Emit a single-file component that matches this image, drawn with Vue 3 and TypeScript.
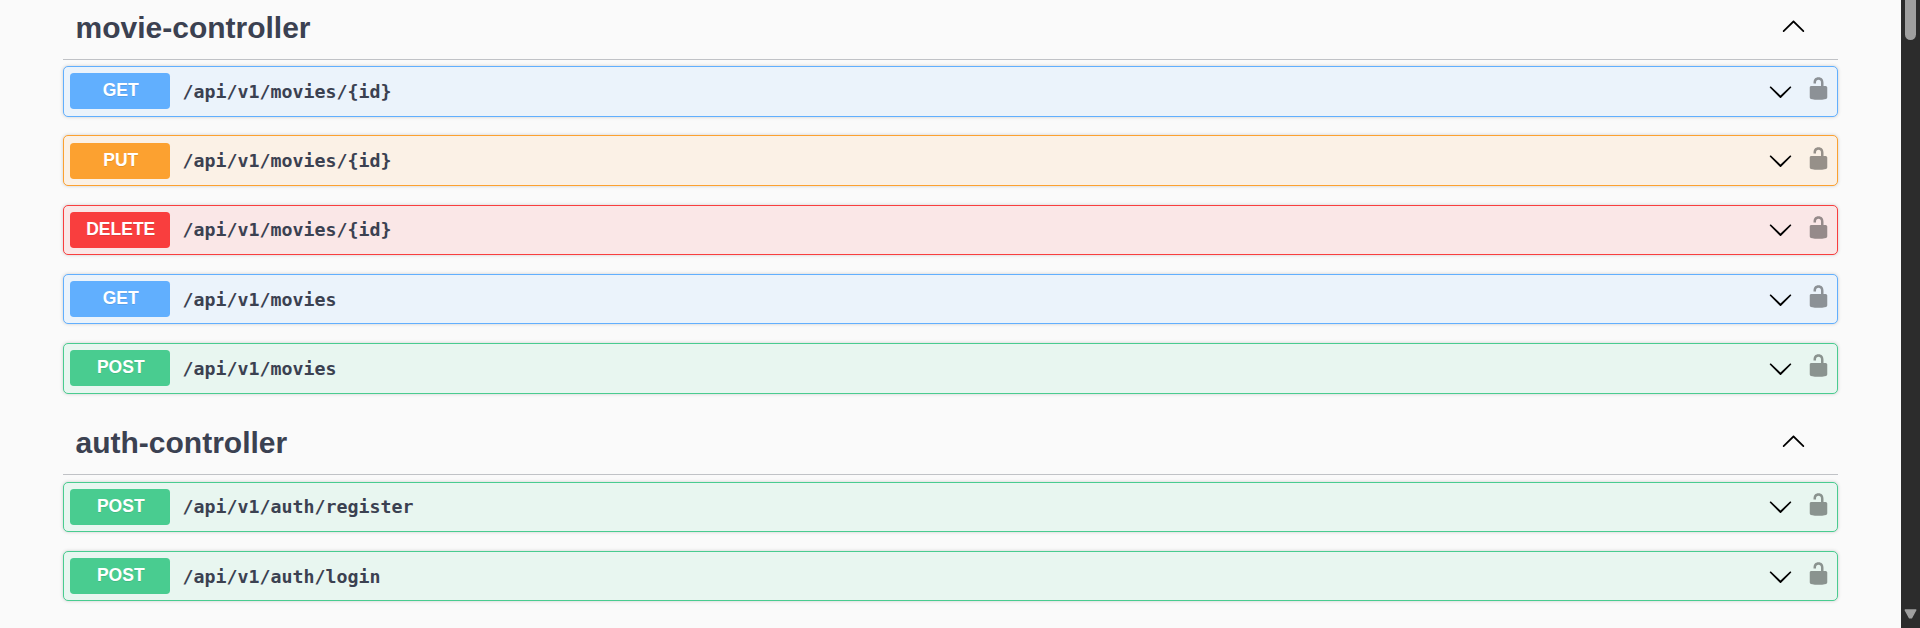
<script setup lang="ts">
interface Operation {
  method: 'get' | 'put' | 'delete' | 'post'
  path: string
}

interface Section {
  name: string
  operations: Operation[]
}

const sections: Section[] = [
  {
    name: 'movie-controller',
    operations: [
      { method: 'get', path: '/api/v1/movies/{id}' },
      { method: 'put', path: '/api/v1/movies/{id}' },
      { method: 'delete', path: '/api/v1/movies/{id}' },
      { method: 'get', path: '/api/v1/movies' },
      { method: 'post', path: '/api/v1/movies' },
    ],
  },
  {
    name: 'auth-controller',
    operations: [
      { method: 'post', path: '/api/v1/auth/register' },
      { method: 'post', path: '/api/v1/auth/login' },
    ],
  },
]
</script>

<template>
  <div class="viewport">
    <main class="content">
      <section v-for="section in sections" :key="section.name">
        <h3 class="tag">
          <span class="tag-name">{{ section.name }}</span>
          <svg class="arrow" viewBox="0 0 20 20" aria-hidden="true">
            <path d="M17.418 14.908c.272.268.709.268.979 0s.271-.701 0-.969l-7.908-7.83c-.27-.268-.707-.268-.979 0l-7.908 7.83c-.27.268-.27.701 0 .969.271.268.709.268.979 0L10 7.767z" />
          </svg>
        </h3>
        <div
          v-for="op in section.operations"
          :key="op.method + op.path"
          class="operation"
          :class="op.method"
        >
          <span class="method">{{ op.method.toUpperCase() }}</span>
          <span class="path">{{ op.path }}</span>
          <svg class="arrow" viewBox="0 0 20 20" aria-hidden="true">
            <path d="M17.418 6.109c.272-.268.709-.268.979 0s.271.701 0 .969l-7.908 7.83c-.27.268-.707.268-.979 0l-7.908-7.83c-.27-.268-.27-.701 0-.969.271-.268.709-.268.979 0L10 13.25z" />
          </svg>
          <svg class="lock" viewBox="0 0 20 20" aria-hidden="true">
            <path d="M15.8 8H14V5.6C14 2.703 12.665 1 10 1 7.334 1 6 2.703 6 5.6V6h2v-.801C8 3.754 8.797 3 10 3c1.203 0 2 .754 2 2.199V8H4c-.553 0-1 .646-1 1.199V17c0 .549.428 1.139.951 1.307l1.197.387C5.672 18.861 6.55 19 7.1 19h5.8c.549 0 1.428-.139 1.951-.307l1.196-.387c.524-.167.953-.757.953-1.306V9.199C17 8.646 16.352 8 15.8 8z" />
          </svg>
        </div>
      </section>
    </main>
    <div class="scrollbar">
      <div class="thumb"></div>
      <svg class="scroll-down" viewBox="0 0 13 10" aria-hidden="true">
        <path d="M1.2 1h10.6L7.5 8.8h-2z" stroke-width="1.4" stroke-linejoin="round" />
      </svg>
    </div>
  </div>
</template>

<style>
body {
  margin: 0;
  background: #fafafa;
}
</style>

<style scoped>
.viewport {
  display: flex;
  width: 1920px;
  height: 628px;
  overflow: hidden;
  background: #fafafa;
  color: #3b4151;
  font-family: Arial, 'Liberation Sans', sans-serif;
}

.content {
  flex: 1;
  margin-top: -3.25px;
  padding: 0 63px;
}

.tag {
  display: flex;
  align-items: center;
  justify-content: space-between;
  box-sizing: border-box;
  height: 63px;
  margin: 0 0 6.25px;
  padding: 0 32px 0 12.5px;
  border-bottom: 1px solid rgba(59, 65, 81, 0.3);
  font-size: 30px;
  font-weight: 700;
}

.tag .arrow {
  margin-bottom: 5px;
}

.operation {
  display: flex;
  align-items: center;
  box-sizing: border-box;
  height: 50.5px;
  margin-bottom: 18.75px;
  padding: 0 6.5px 0 6px;
  border: 1px solid;
  border-radius: 5px;
  box-shadow: 0 0 3.75px rgba(0, 0, 0, 0.19);
}

.method {
  box-sizing: border-box;
  width: 100px;
  height: 36px;
  margin-top: 0.1px;
  padding-left: 1.5px;
  border-radius: 3.75px;
  color: #fff;
  font-size: 17.5px;
  font-weight: 700;
  line-height: 35.4px;
  text-align: center;
  text-shadow: 0 1.25px 0 rgba(0, 0, 0, 0.1);
}

.path {
  flex: 1;
  padding: 0.4px 0 0 12.5px;
  font-family: Consolas, 'DejaVu Sans Mono', monospace;
  font-size: 18.27px;
  font-weight: 700;
}

.arrow,
.lock {
  flex: none;
  width: 25px;
  height: 25px;
}

.lock {
  margin: 0 0 5px 12.5px;
  opacity: 0.4;
}

.get {
  border-color: #61affe;
  background: #ebf3fb;
}

.get .method {
  background: #61affe;
}

.put {
  border-color: #fca130;
  background: #fbf1e6;
}

.put .method {
  background: #fca130;
}

.delete {
  border-color: #f93e3e;
  background: #fae7e7;
}

.delete .method {
  background: #f93e3e;
}

.post {
  border-color: #49cc90;
  background: #e8f6f0;
}

.post .method {
  background: #49cc90;
}

.scrollbar {
  display: flex;
  flex-direction: column;
  align-items: center;
  justify-content: space-between;
  box-sizing: border-box;
  width: 19px;
  padding-bottom: 9px;
  background: #2c2c2c;
}

.thumb {
  width: 11px;
  height: 40px;
  border-radius: 0 0 5.5px 5.5px;
  background: #9f9f9f;
}

.scroll-down {
  width: 13px;
  height: 10px;
  fill: #9f9f9f;
  stroke: #9f9f9f;
}
</style>
